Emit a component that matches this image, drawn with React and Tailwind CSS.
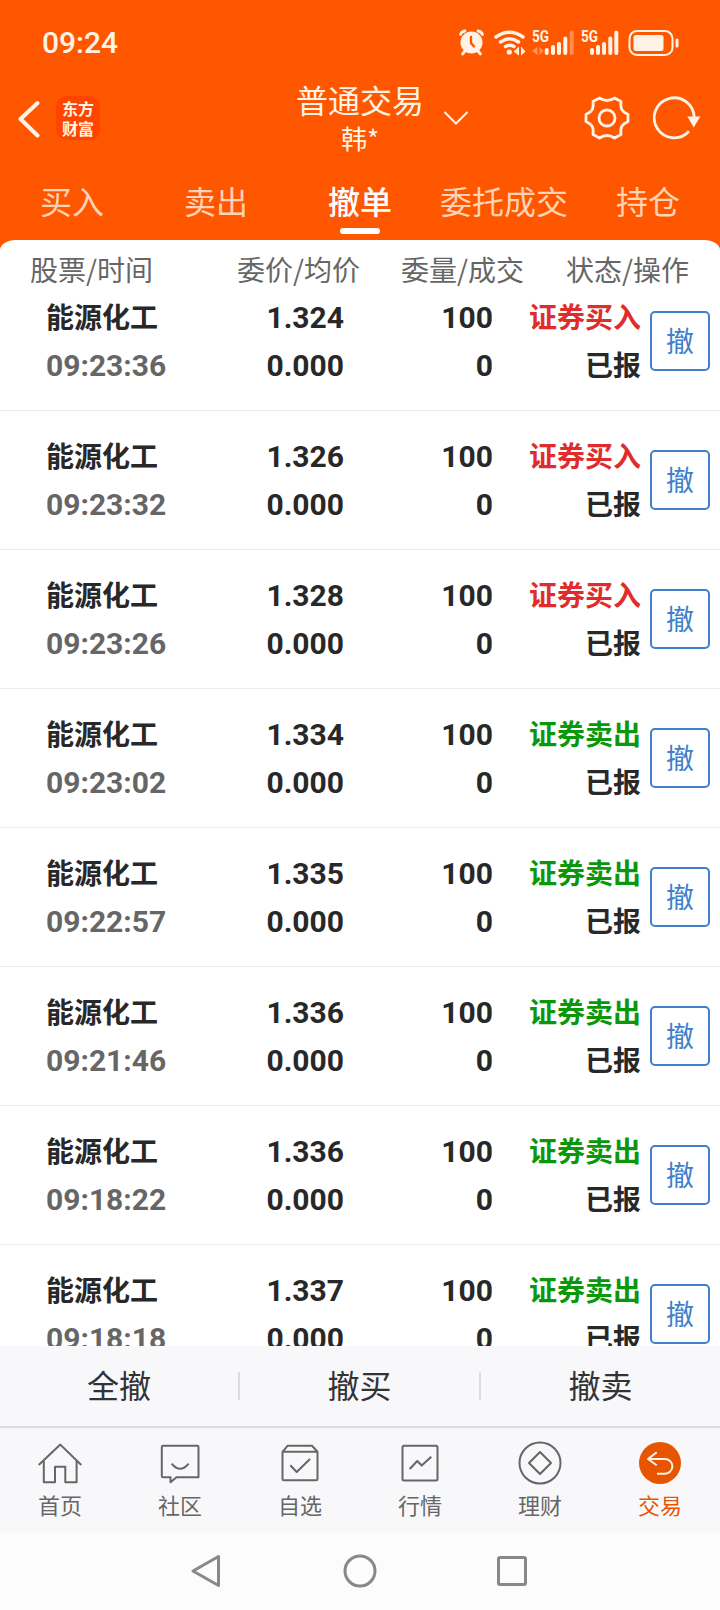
const tabs = ['买入', '卖出', '撤单', '委托成交', '持仓'];
const activeTab = '撤单';

const orders = [
    { id: 1, name: '能源化工', time: '09:23:36', price: '1.324', avg: '0.000', qty: 100, filled: 0, side: 'buy' },
    { id: 2, name: '能源化工', time: '09:23:32', price: '1.326', avg: '0.000', qty: 100, filled: 0, side: 'buy' },
    { id: 3, name: '能源化工', time: '09:23:26', price: '1.328', avg: '0.000', qty: 100, filled: 0, side: 'buy' },
    { id: 4, name: '能源化工', time: '09:23:02', price: '1.334', avg: '0.000', qty: 100, filled: 0, side: 'sell' },
    { id: 5, name: '能源化工', time: '09:22:57', price: '1.335', avg: '0.000', qty: 100, filled: 0, side: 'sell' },
    { id: 6, name: '能源化工', time: '09:21:46', price: '1.336', avg: '0.000', qty: 100, filled: 0, side: 'sell' },
    { id: 7, name: '能源化工', time: '09:18:22', price: '1.336', avg: '0.000', qty: 100, filled: 0, side: 'sell' },
    { id: 8, name: '能源化工', time: '09:18:18', price: '1.337', avg: '0.000', qty: 100, filled: 0, side: 'sell' },
];

const sides = {
    buy: { label: '证券买入', color: 'text-[#e02c2c]' },
    sell: { label: '证券卖出', color: 'text-[#0a980a]' },
};

export default function App() {
    return (
        <div className="flex h-[1610px] w-[720px] flex-col overflow-hidden bg-white font-['Noto_Sans_CJK_SC',sans-serif]">
            <div className="h-[250px] shrink-0 bg-[#ff5700] text-[#fff3e6]">
                <StatusBar />
                <TitleBar />
                <Tabs />
                <div className="h-[10px] rounded-t-[16px_10px] bg-white" />
            </div>
            <OrderHeader />
            <div className="h-[1046px] shrink-0 overflow-hidden">
                <div className="-mt-[28px]">
                    {orders.map((order) => <OrderRow key={order.id} order={order} />)}
                </div>
            </div>
            <BulkActions />
            <BottomNav />
            <SystemNav />
        </div>
    );
}

function StatusBar() {
    return (
        <div className="flex h-[80px] items-center justify-between pl-[42px] pr-[38px] pt-[4px]">
            <span className="font-[Roboto,sans-serif] text-[30px] font-medium">09:24</span>
            <svg width="224" height="32" viewBox="0 0 224 32" fill="none">
                <g stroke="currentColor" strokeLinecap="round">
                    <circle cx="13.500" cy="16.500" r="11" fill="currentColor" stroke="none" />
                    <path d="M2.500 8.500Q3.500 5.500 7 5M24.500 8.500Q23.500 5.500 20 5M4.500 28l2.500-3M22.500 28l-2.500-3" strokeWidth="2.800" />
                    <path d="M13 11V17L16 20.500" stroke="#ff5700" strokeWidth="2.400" />
                </g>
                <g stroke="currentColor" strokeWidth="3.400" strokeLinecap="round">
                    <path d="M38 11Q51.500 1.500 65 11" />
                    <path d="M42.500 16Q51.500 9.500 60.500 16" />
                    <path d="M47.500 20.500Q51.500 18 56 20.500" />
                </g>
                <circle cx="51.300" cy="26" r="2.600" fill="currentColor" />
                <path d="M61 20.500v9l-5.500-4zM63 20.500v9l4.500-4z" fill="currentColor" />
                <text x="74" y="16" textLength="17" lengthAdjust="spacingAndGlyphs" fill="currentColor" className="font-[Roboto,sans-serif] text-[17px] font-bold">5G</text>
                <path d="M79.500 21v8l-5.500-4zM81.500 21v8l4-4z" fill="currentColor" opacity="0.4" />
                <g stroke="currentColor" strokeWidth="4" strokeLinecap="round">
                    <path d="M88.700 24V27M95 21V27M101 18V27M107.300 12.500V27" />
                    <path d="M113.700 6.500V27" opacity="0.35" />
                    <path d="M134 24V27M140 21V27M146 18V27M152.300 12.500V27M158.300 6.500V27" />
                </g>
                <text x="123" y="16" textLength="17" lengthAdjust="spacingAndGlyphs" fill="currentColor" className="font-[Roboto,sans-serif] text-[17px] font-bold">5G</text>
                <rect x="171.500" y="5" width="43" height="24" rx="7.500" stroke="currentColor" strokeWidth="2" />
                <rect x="175.500" y="9" width="30" height="16" rx="2.500" fill="currentColor" />
                <path d="M219 14V20" stroke="currentColor" strokeWidth="3" strokeLinecap="round" />
            </svg>
        </div>
    );
}

function TitleBar() {
    return (
        <div className="flex h-[76px] items-center">
            <div className="flex w-[240px] items-center pl-[17px]">
                <svg width="24" height="40" viewBox="0 0 24 40" fill="none" stroke="currentColor" strokeWidth="4" strokeLinecap="round" strokeLinejoin="round">
                    <path d="M20.500 5 3.500 21 20.500 37.500" />
                </svg>
                <div className="ml-[15px] flex size-[44px] flex-col items-center justify-center rounded-[10px] bg-[#ff4400] text-[16px] font-bold leading-[20px]">
                    <span>东方</span>
                    <span>财富</span>
                </div>
            </div>
            <div className="flex w-[240px] flex-col items-center">
                <div className="text-[32px] leading-[40px]">普通交易</div>
                <div className="text-[26px] leading-[38px]">韩*</div>
            </div>
            <div className="flex w-[240px] items-center">
                <svg className="ml-[-37px]" width="26" height="16" viewBox="0 0 26 16" fill="none" stroke="currentColor" strokeWidth="2">
                    <path d="M1.500 2 13 13.500 24.500 2" />
                </svg>
                <svg className="ml-[115px]" width="46" height="44" viewBox="0 0 46 44" fill="none" stroke="currentColor" strokeWidth="2.800" strokeLinejoin="round">
                    <path d="M15.500 2Q23 7 30.500 2L37 5.500C36 13 38 15.500 44 18.500V25.500C38 28.500 36 31 37 38.500L30.500 42Q23 37 15.500 42L9 38.500C10 31 8 28.500 2 25.500V18.500C8 15.500 10 13 9 5.500Z" />
                    <circle cx="23" cy="22" r="8" />
                </svg>
                <svg className="ml-[23px]" width="48" height="44" viewBox="0 0 48 44" fill="none">
                    <path d="M36 35.300A20 20 0 1 1 41.200 22" stroke="currentColor" strokeWidth="2.800" />
                    <path d="M34.300 20.500H47.300L40.800 31.500Z" fill="currentColor" />
                </svg>
            </div>
        </div>
    );
}

function Tabs() {
    return (
        <div className="grid h-[84px] grid-cols-5">
            {tabs.map((tab) => (
                <div key={tab} className="flex flex-col items-center pt-[20px]">
                    <span className={tab === activeTab ? 'text-[32px] font-medium leading-[48px] text-white' : 'text-[32px] leading-[48px] text-[#ffd3b5]'}>{tab}</span>
                    {tab === activeTab && <span className="mt-[4px] h-[6px] w-[40px] rounded-[3px] bg-white" />}
                </div>
            ))}
        </div>
    );
}

function OrderHeader() {
    return (
        <div className="flex h-[50px] shrink-0 bg-white text-[28px] leading-[38px] text-[#666]">
            <span className="w-[206px] pl-[30px]">股票/时间</span>
            <span className="w-[154px] text-right">委价/均价</span>
            <span className="w-[164px] text-right">委量/成交</span>
            <span className="w-[165px] text-right">状态/操作</span>
        </div>
    );
}

function OrderRow({ order }) {
    const side = sides[order.side];

    return (
        <div className="flex h-[139px] items-center border-b border-[#ebebeb] text-[28px] font-bold leading-[48px] text-[#282828]">
            <div className="w-[206px] pb-[2px] pl-[46px]">
                <div>{order.name}</div>
                <Num className="text-[#666]">{order.time}</Num>
            </div>
            <div className="w-[138px] pb-[2px] text-right">
                <Num>{order.price}</Num>
                <Num>{order.avg}</Num>
            </div>
            <div className="w-[149px] pb-[2px] text-right">
                <Num>{order.qty}</Num>
                <Num>{order.filled}</Num>
            </div>
            <div className="w-[148px] pb-[2px] text-right">
                <div className={side.color}>{side.label}</div>
                <div>已报</div>
            </div>
            <button className="ml-[9px] flex size-[60px] items-center justify-center rounded-[5px] border-2 border-[#3f7fcb] pb-[2px] font-normal text-[#3f7fcb]">撤</button>
        </div>
    );
}

// Roboto sits higher than the CJK face on the same line height
function Num({ className = '', children }) {
    return <div className={`h-[48px] pt-[2px] font-[Roboto,sans-serif] text-[30px] font-bold leading-[48px] ${className}`}>{children}</div>;
}

function BulkActions() {
    return (
        <div className="flex h-[80px] shrink-0 items-center bg-[#f8f8fb] text-[32px] text-[#333]">
            <span className="w-[238px] pb-[4px] text-center">全撤</span>
            <span className="h-[28px] w-[2px] bg-[#dcdcdf]" />
            <span className="w-[239px] pb-[4px] text-center">撤买</span>
            <span className="h-[28px] w-[2px] bg-[#dcdcdf]" />
            <span className="w-[239px] pb-[4px] text-center">撤卖</span>
        </div>
    );
}

function BottomNav() {
    return (
        <div className="grid h-[106px] shrink-0 grid-cols-6 border-t-2 border-[#dddde0] bg-[#f8f8fb] text-[#666]">
            <NavItem label="首页">
                <path d="M.7 24 22.300 3.600 43.300 24M5.800 20V41.300H17V25.800H27.300V41.300H38.600V20" />
            </NavItem>
            <NavItem label="社区">
                <path d="M5 4.700H39.200Q40.500 4.700 40.500 6V36.300H18.500L12.500 41.300V36.300H5Q3.800 36.300 3.800 35V6Q3.800 4.700 5 4.700Z" />
                <path d="M13.700 22.700Q22 33 30.700 22.700" />
            </NavItem>
            <NavItem label="自选">
                <path d="M4.500 10.800V38Q4.500 39.300 6 39.300H38Q39.500 39.300 39.500 38V10.800L34 4.800H9.500ZM4.500 10.800H39.500" />
                <path d="M12.300 24.300 18.700 31 32 18" />
            </NavItem>
            <NavItem label="行情">
                <rect x="4.500" y="4.700" width="35" height="34.700" rx="1.500" />
                <path d="M11.700 28 19.300 20 23.700 24.500 33.300 15.700" />
            </NavItem>
            <NavItem label="理财">
                <circle cx="22" cy="22" r="20.500" />
                <path d="M22 11 33 22 22 33 11 22Z" />
            </NavItem>
            <NavItem label="交易" active>
                <circle cx="22" cy="22" r="21" fill="currentColor" stroke="none" />
                <path d="M18.700 11.300 10 18 18.700 24.300M10 18H27A7.300 7.300 0 0 1 27 32.700H19" stroke="#fff3e6" />
            </NavItem>
        </div>
    );
}

function NavItem({ label, active, children }) {
    return (
        <div className={active ? 'flex flex-col items-center pt-[13px] text-[#e85500]' : 'flex flex-col items-center pt-[13px]'}>
            <svg width="44" height="44" viewBox="0 0 44 44" fill="none" stroke="currentColor" strokeWidth="2" strokeLinejoin="round">{children}</svg>
            <span className="mt-[3px] text-[22px] leading-[32px]">{label}</span>
        </div>
    );
}

function SystemNav() {
    return (
        <div className="flex h-[78px] shrink-0 items-center bg-[#fcfcfc] pl-[189px] text-[#888]">
            <svg width="34" height="36" viewBox="0 0 34 36" fill="none" stroke="currentColor" strokeWidth="3" strokeLinejoin="round">
                <path d="M4 18 29.500 3.500V32.500Z" />
            </svg>
            <svg className="ml-[119px]" width="36" height="36" viewBox="0 0 36 36" fill="none" stroke="currentColor" strokeWidth="3">
                <circle cx="18" cy="18" r="15" />
            </svg>
            <svg className="ml-[116px]" width="36" height="36" viewBox="0 0 36 36" fill="none" stroke="currentColor" strokeWidth="3">
                <rect x="4.500" y="4.500" width="27" height="27" rx="1.500" />
            </svg>
        </div>
    );
}
